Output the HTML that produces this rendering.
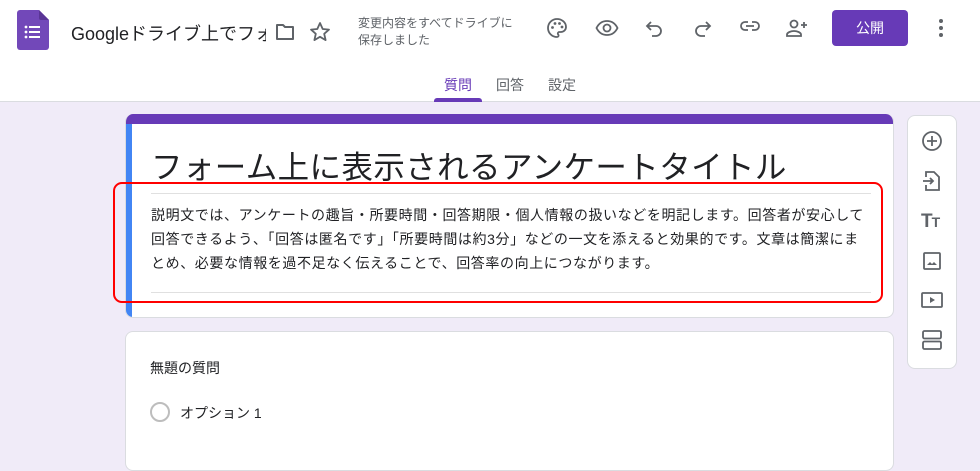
<!DOCTYPE html>
<html><head><meta charset="utf-8"><style>
*{box-sizing:border-box;margin:0;padding:0}
body{width:980px;height:462px;overflow:hidden;background:#f0ebf8;font-family:"Liberation Sans","Noto Sans CJK JP",sans-serif;position:relative;color:#202124}
.hdr{position:absolute;left:0;top:0;width:980px;height:102px;background:#fff;border-bottom:1px solid #dadce0}
.abs{position:absolute}
.ic{position:absolute;width:24px;height:24px}
.card{position:absolute;background:#fff;border-radius:8px;border:1px solid #dadce0}
</style></head><body>
<div class="hdr">
  <svg class="abs" style="left:17px;top:10px" width="32" height="40" viewBox="0 0 32 40"><path d="M3 0h19l10 10v27a3 3 0 0 1-3 3H3a3 3 0 0 1-3-3V3a3 3 0 0 1 3-3z" fill="#7248b9"/><path d="M22 0l10 10h-8a2 2 0 0 1-2-2z" fill="#5a3596"/><g fill="#fff"><circle cx="9" cy="17" r="1.4"/><circle cx="9" cy="22" r="1.4"/><circle cx="9" cy="27" r="1.4"/><rect x="12" y="16" width="11" height="2"/><rect x="12" y="21" width="11" height="2"/><rect x="12" y="26" width="11" height="2"/></g></svg>
  <div class="abs" style="left:71px;top:20px;width:195px;overflow:hidden;white-space:nowrap;font-size:18px;color:#202124">Googleドライブ上でフォーム</div>
  <svg class="ic" style="left:273px;top:20px" viewBox="0 0 24 24"><path d="M4 5h6l2 2h8v12H4z" fill="none" stroke="#5f6368" stroke-width="2" stroke-linejoin="round"/></svg>
  <svg class="ic" style="left:308px;top:20px" viewBox="0 0 24 24"><path d="M12 3l2.7 6 6.3.6-4.8 4.2 1.4 6.3L12 16.8 6.4 20.1l1.4-6.3L3 9.6 9.3 9z" fill="none" stroke="#5f6368" stroke-width="1.8" stroke-linejoin="round"/></svg>
  <div class="abs" style="left:358px;top:15px;font-size:12px;line-height:17px;color:#5f6368">変更内容をすべてドライブに<br>保存しました</div>
  <svg class="ic" style="left:545px;top:16px" viewBox="0 0 24 24"><path d="M12 3a9 9 0 0 0 0 18c1 0 1.6-.7 1.6-1.5 0-.4-.2-.7-.4-1-.2-.3-.4-.6-.4-1 0-.8.7-1.5 1.5-1.5H16a5 5 0 0 0 5-5C21 6.6 17 3 12 3z" fill="none" stroke="#5f6368" stroke-width="1.8"/><circle cx="7.5" cy="11.5" r="1.4" fill="#5f6368"/><circle cx="10" cy="7.5" r="1.4" fill="#5f6368"/><circle cx="14.5" cy="7.5" r="1.4" fill="#5f6368"/><circle cx="17" cy="11" r="1.4" fill="#5f6368"/></svg>
  <svg class="ic" style="left:595px;top:16px" viewBox="0 0 24 24"><path d="M1.5 12C4 7 8 5 12 5s8 2 10.5 7c-2.5 5-6.5 7-10.5 7S4 17 1.5 12z" fill="none" stroke="#5f6368" stroke-width="1.8"/><circle cx="12" cy="12" r="3.5" fill="none" stroke="#5f6368" stroke-width="1.8"/></svg>
  <svg class="ic" style="left:643px;top:16px" viewBox="0 0 24 24"><path d="M8 6L4 10l4 4M4 10h9a5 5 0 0 1 0 10H9" fill="none" stroke="#5f6368" stroke-width="1.8"/></svg>
  <svg class="ic" style="left:690px;top:16px" viewBox="0 0 24 24"><path d="M16 6l4 4-4 4M20 10h-9a5 5 0 0 0 0 10h4" fill="none" stroke="#5f6368" stroke-width="1.8"/></svg>
  <svg class="ic" style="left:738px;top:14px" viewBox="0 0 24 24"><path d="M10 8H7a4 4 0 0 0 0 8h3M14 8h3a4 4 0 0 1 0 8h-3M8 12h8" fill="none" stroke="#5f6368" stroke-width="1.8"/></svg>
  <svg class="ic" style="left:785px;top:16px" viewBox="0 0 24 24"><circle cx="9" cy="8" r="3.5" fill="none" stroke="#5f6368" stroke-width="1.8"/><path d="M2 20v-1.5c0-2 4-3.5 7-3.5s7 1.5 7 3.5V20z" fill="none" stroke="#5f6368" stroke-width="1.8"/><path d="M19 6v6M16 9h6" stroke="#5f6368" stroke-width="1.8"/></svg>
  <div class="abs" style="left:832px;top:10px;width:76px;height:36px;background:#673ab7;border-radius:4px;color:#fff;font-size:14px;text-align:center;line-height:36px">公開</div>
  <svg class="ic" style="left:929px;top:16px" viewBox="0 0 24 24"><circle cx="12" cy="5" r="2" fill="#5f6368"/><circle cx="12" cy="12" r="2" fill="#5f6368"/><circle cx="12" cy="19" r="2" fill="#5f6368"/></svg>
  <div class="abs" style="left:444px;top:75px;font-size:14px;color:#673ab7">質問</div>
  <div class="abs" style="left:434px;top:98px;width:48px;height:4px;background:#673ab7;border-radius:3px 3px 0 0"></div>
  <div class="abs" style="left:496px;top:75px;font-size:14px;color:#5f6368">回答</div>
  <div class="abs" style="left:548px;top:75px;font-size:14px;color:#5f6368">設定</div>
</div>

<div class="card" style="left:125px;top:114px;width:769px;height:204px;overflow:hidden;border-top:none">
  <div class="abs" style="left:0;top:0;width:769px;height:10px;background:#673ab7"></div>
  <div class="abs" style="left:0;top:10px;width:6px;height:194px;background:#4285f4"></div>
  <div class="abs" style="left:25px;top:28px;font-size:31.5px;letter-spacing:0.4px;color:#202124;white-space:nowrap">フォーム上に表示されるアンケートタイトル</div>
  <div class="abs" style="left:25px;top:79px;width:720px;height:1px;background:#e0e0e0"></div>
  <div class="abs" style="left:25px;top:89px;font-size:14px;line-height:24px;letter-spacing:0.6px;color:#202124;white-space:nowrap">説明文では、アンケートの趣旨・所要時間・回答期限・個人情報の扱いなどを明記します。回答者が安心して<br>回答できるよう、&#12300;回答は匿名です&#12301;&#12300;所要時間は約3分&#12301;などの一文を添えると効果的です。文章は簡潔にま<br>とめ、必要な情報を過不足なく伝えることで、回答率の向上につながります。</div>
  <div class="abs" style="left:25px;top:178px;width:720px;height:1px;background:#e0e0e0"></div>
</div>
<div class="abs" style="left:113px;top:182px;width:770px;height:121px;border:2.5px solid #f00;border-radius:9px"></div>

<div class="card" style="left:125px;top:331px;width:769px;height:140px">
  <div class="abs" style="left:24px;top:26px;font-size:14px">無題の質問</div>
  <div class="abs" style="left:24px;top:70px;width:20px;height:20px;border:2px solid #bdbdbd;border-radius:50%"></div>
  <div class="abs" style="left:54px;top:71px;font-size:14px">オプション 1</div>
</div>

<div class="card" style="left:907px;top:115px;width:50px;height:254px">
  <svg class="ic" style="left:12px;top:13px" viewBox="0 0 24 24"><circle cx="12" cy="12" r="9" fill="none" stroke="#5f6368" stroke-width="1.8"/><path d="M12 7v10M7 12h10" stroke="#5f6368" stroke-width="1.8"/></svg>
  <svg class="ic" style="left:12px;top:53px" viewBox="0 0 24 24"><path d="M6 8V3h8l5 5v13H6v-5" fill="none" stroke="#5f6368" stroke-width="1.8"/><path d="M3 12h10M10 9l3 3-3 3" fill="none" stroke="#5f6368" stroke-width="1.8"/></svg>
  <div class="abs" style="left:13px;top:95px;font-size:19px;font-weight:bold;color:#5f6368;letter-spacing:-1px">T<span style="font-size:14px">T</span></div>
  <svg class="ic" style="left:12px;top:133px" viewBox="0 0 24 24"><rect x="4" y="4" width="16" height="16" rx="1" fill="none" stroke="#5f6368" stroke-width="1.8"/><path d="M7 16l3-3 2 2 2-2 3 3z" fill="#5f6368"/></svg>
  <svg class="ic" style="left:12px;top:172px" viewBox="0 0 24 24"><rect x="2" y="5" width="20" height="14" rx="1" fill="none" stroke="#5f6368" stroke-width="1.8"/><path d="M10 9v6l5-3z" fill="#5f6368"/></svg>
  <svg class="ic" style="left:12px;top:212px" viewBox="0 0 24 24"><rect x="3" y="3" width="18" height="7.5" rx="1.5" fill="none" stroke="#5f6368" stroke-width="1.8"/><rect x="3" y="13.5" width="18" height="7.5" rx="1.5" fill="none" stroke="#5f6368" stroke-width="1.8"/></svg>
</div>
</body></html>
